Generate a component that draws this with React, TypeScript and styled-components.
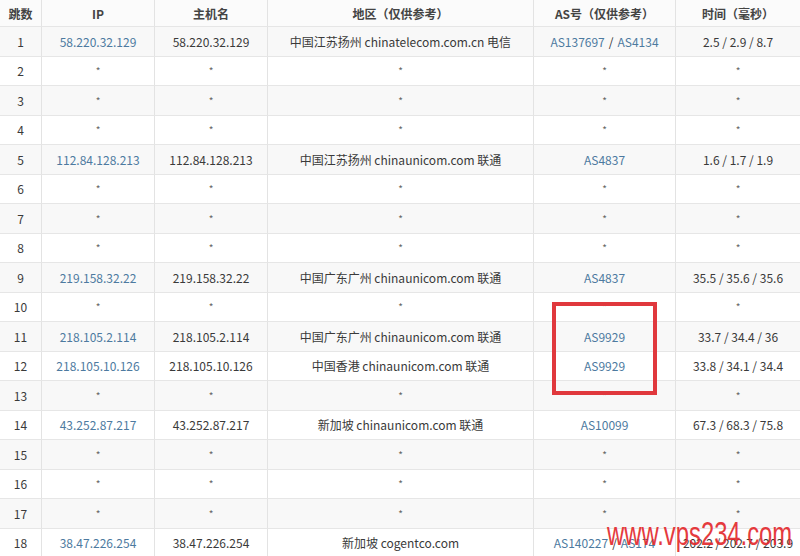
import React from "react";
import styled, { createGlobalStyle } from "styled-components";

const GlobalStyle = createGlobalStyle`
  html, body {
    margin: 0;
    padding: 0;
    background: #ffffff;
    overflow: hidden;
  }
`;

type Hop = {
  no: number;
  ip?: string;
  host?: string;
  region?: string;
  as?: string[];
  time?: string;
};

const hops: Hop[] = [
  { no: 1, ip: "58.220.32.129", host: "58.220.32.129", region: "中国江苏扬州 chinatelecom.com.cn 电信", as: ["AS137697", "AS4134"], time: "2.5 / 2.9 / 8.7" },
  { no: 2 },
  { no: 3 },
  { no: 4 },
  { no: 5, ip: "112.84.128.213", host: "112.84.128.213", region: "中国江苏扬州 chinaunicom.com 联通", as: ["AS4837"], time: "1.6 / 1.7 / 1.9" },
  { no: 6 },
  { no: 7 },
  { no: 8 },
  { no: 9, ip: "219.158.32.22", host: "219.158.32.22", region: "中国广东广州 chinaunicom.com 联通", as: ["AS4837"], time: "35.5 / 35.6 / 35.6" },
  { no: 10 },
  { no: 11, ip: "218.105.2.114", host: "218.105.2.114", region: "中国广东广州 chinaunicom.com 联通", as: ["AS9929"], time: "33.7 / 34.4 / 36" },
  { no: 12, ip: "218.105.10.126", host: "218.105.10.126", region: "中国香港 chinaunicom.com 联通", as: ["AS9929"], time: "33.8 / 34.1 / 34.4" },
  { no: 13 },
  { no: 14, ip: "43.252.87.217", host: "43.252.87.217", region: "新加坡 chinaunicom.com 联通", as: ["AS10099"], time: "67.3 / 68.3 / 75.8" },
  { no: 15 },
  { no: 16 },
  { no: 17 },
  { no: 18, ip: "38.47.226.254", host: "38.47.226.254", region: "新加坡 cogentco.com", as: ["AS140227", "AS174"], time: "202.2 / 202.7 / 203.9" },
];

const Page = styled.div`
  position: relative;
  width: 800px;
  height: 556px;
  overflow: hidden;
  font-family: "Noto Sans CJK SC", "Open Sans", sans-serif;
  font-size: 12px;
  color: #333333;
`;

const Grid = styled.div`
  display: grid;
  grid-template-columns: 42px 113px 113px 266px 142px 124px;
  grid-template-rows: 27px;
  grid-auto-rows: 29.5px;
`;

const Cell = styled.div<{ $head?: boolean; $shade?: boolean; $last?: boolean }>`
  display: flex;
  align-items: center;
  justify-content: center;
  white-space: nowrap;
  box-sizing: border-box;
  border-bottom: 1px solid #e6e6e6;
  border-right: ${(p) => (p.$last ? "none" : "1px solid #e3e3e3")};
  background: ${(p) => (p.$head ? "#fbfbfb" : p.$shade ? "#f8f8f8" : "#ffffff")};
  font-weight: ${(p) => (p.$head ? 700 : 400)};
  color: ${(p) => (p.$head ? "#444444" : "#3a3a3a")};
`;

const Link = styled.span`
  color: #4d7aa0;
`;

const Star = styled.span`
  color: #666666;
  font-size: 10px;
`;

const Slash = styled.span`
  color: #333333;
  margin: 0 4px;
`;

const Highlight = styled.div`
  position: absolute;
  left: 552px;
  top: 302px;
  width: 105px;
  height: 93px;
  box-sizing: border-box;
  border: 4px solid #e0383d;
`;

const Watermark = styled.div`
  position: absolute;
  left: 607px;
  top: 515px;
  font-family: "Liberation Sans", Arial, sans-serif;
  font-size: 34px;
  line-height: 36px;
  color: #e3262a;
  opacity: 0.9;
  transform: scaleX(0.7);
  transform-origin: left center;
  white-space: nowrap;
`;

const heads = ["跳数", "IP", "主机名", "地区（仅供参考）", "AS号（仅供参考）", "时间（毫秒）"];

function Val({ v, link }: { v?: string; link?: boolean }) {
  if (!v) return <Star>*</Star>;
  return link ? <Link>{v}</Link> : <>{v}</>;
}

export default function App() {
  return (
    <>
      <GlobalStyle />
      <Page>
        <Grid>
          {heads.map((h, i) => (
            <Cell key={h} $head $last={i === 5}>
              {h}
            </Cell>
          ))}
          {hops.map((r) => {
            const shade = r.no % 2 === 1;
            return (
              <React.Fragment key={r.no}>
                <Cell $shade={shade}>{r.no}</Cell>
                <Cell $shade={shade}>
                  <Val v={r.ip} link />
                </Cell>
                <Cell $shade={shade}>
                  <Val v={r.host} />
                </Cell>
                <Cell $shade={shade}>
                  <Val v={r.region} />
                </Cell>
                <Cell $shade={shade}>
                  {r.as ? (
                    r.as.map((a, i) => (
                      <React.Fragment key={a}>
                        {i > 0 && <Slash>/</Slash>}
                        <Link>{a}</Link>
                      </React.Fragment>
                    ))
                  ) : (
                    <Star>*</Star>
                  )}
                </Cell>
                <Cell $shade={shade} $last>
                  <Val v={r.time} />
                </Cell>
              </React.Fragment>
            );
          })}
        </Grid>
        <Highlight />
        <Watermark>www.vps234.com</Watermark>
      </Page>
    </>
  );
}
